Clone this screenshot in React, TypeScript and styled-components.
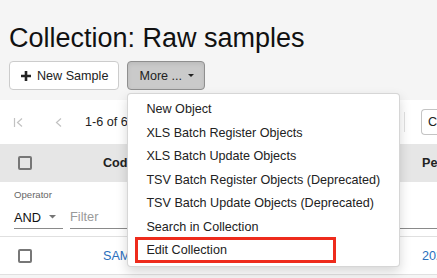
import styled, { createGlobalStyle } from 'styled-components';

const GlobalStyle = createGlobalStyle`
  html, body {
    margin: 0;
    padding: 0;
    background: #f5f5f5;
    font-family: "Liberation Sans", Arial, Helvetica, sans-serif;
    color: #222;
  }
`;

const menuItems = [
  'New Object',
  'XLS Batch Register Objects',
  'XLS Batch Update Objects',
  'TSV Batch Register Objects (Deprecated)',
  'TSV Batch Update Objects (Deprecated)',
  'Search in Collection',
  'Edit Collection',
];

const PlusIcon = () => (
  <svg width='10' height='10' viewBox='0 0 10 10'>
    <path d='M5 0v10M0 5h10' stroke='#222' strokeWidth='2.6' />
  </svg>
);

const Caret = ({ color = '#222', w = 6 }: { color?: string; w?: number }) => (
  <svg width={w} height={w / 2} viewBox='0 0 6 3'>
    <path d='M0 0h6L3 3z' fill={color} />
  </svg>
);

const FirstPageIcon = () => (
  <svg width='11' height='11' viewBox='0 0 11 11'>
    <path d='M1.5 1v9M9 1.5L4.5 5.5L9 9.5' stroke='#c2c2c2' strokeWidth='1.2' fill='none' />
  </svg>
);

const PrevIcon = () => (
  <svg width='7' height='11' viewBox='0 0 7 11'>
    <path d='M6 1.5L1.5 5.5L6 9.5' stroke='#c2c2c2' strokeWidth='1.2' fill='none' />
  </svg>
);

export default function App() {
  return (
    <Page>
      <GlobalStyle />
      <Head>
        <Title>Collection: Raw samples</Title>
        <Toolbar>
          <Button>
            <PlusIcon />
            New Sample
          </Button>
          <MenuHolder>
            <Button pressed>
              More ...
              <Caret w={6} />
            </Button>
            <Menu>
              {menuItems.map((label) => (
                <MenuItem key={label} marked={label === 'Edit Collection'}>
                  {label}
                </MenuItem>
              ))}
            </Menu>
          </MenuHolder>
        </Toolbar>
      </Head>

      <Paper>
        <Pager>
          <PagerIcon size={42}>
            <FirstPageIcon />
          </PagerIcon>
          <PagerIcon size={30}>
            <PrevIcon />
          </PagerIcon>
          <PagerText>1-6 of 6</PagerText>
          <Spacer />
          <Divider />
          <ColumnsBox>C</ColumnsBox>
        </Pager>

        <HeaderRow>
          <CheckCell>
            <Checkbox />
          </CheckCell>
          <CodeCell>
            <HeadText>Code</HeadText>
          </CodeCell>
          <RestCell>
            <HeadText>Permlink</HeadText>
          </RestCell>
        </HeaderRow>

        <FilterRow>
          <Operator>
            <OperatorLabel>Operator</OperatorLabel>
            <OperatorSelect>
              AND
              <Caret color='#757575' w={7} />
            </OperatorSelect>
          </Operator>
          <FilterInput>Filter</FilterInput>
        </FilterRow>

        <DataRow>
          <CheckCell>
            <Checkbox />
          </CheckCell>
          <CodeCell>
            <Link>SAMPLE-1</Link>
          </CodeCell>
          <RestCell>
            <Link>2023</Link>
          </RestCell>
        </DataRow>
      </Paper>
    </Page>
  );
}

const Page = styled.div`
  width: 437px;
  height: 278px;
  overflow: hidden;
`;

const Head = styled.div`
  padding: 23px 9px 0;
`;

const Title = styled.h1`
  margin: 0;
  font-size: 27px;
  line-height: 30px;
  font-weight: 400;
  color: #111;
  white-space: nowrap;
`;

const Toolbar = styled.div`
  display: flex;
  gap: 8px;
  margin-top: 8px;
`;

const Button = styled.button<{ pressed?: boolean }>`
  display: flex;
  align-items: center;
  gap: 6px;
  height: 29px;
  padding: 0 10px 0 11px;
  font-family: inherit;
  font-size: 12.6px;
  color: #222;
  border-radius: 4px;
  border: 1px solid ${(p) => (p.pressed ? '#8f8f8f' : '#cccccc')};
  background: ${(p) => (p.pressed ? '#cacaca' : '#ffffff')};
  box-shadow: ${(p) => (p.pressed ? 'inset 0 2px 4px rgba(0,0,0,0.08)' : 'none')};
  cursor: pointer;
`;

const MenuHolder = styled.div`
  position: relative;
`;

const Menu = styled.ul`
  position: absolute;
  z-index: 2;
  top: 32px;
  left: 0;
  width: 271px;
  margin: 0;
  padding: 4px 0 3px;
  list-style: none;
  background: #fff;
  border: 1px solid rgba(0, 0, 0, 0.16);
  border-radius: 4px;
  box-shadow: 0 5px 12px rgba(0, 0, 0, 0.16);
`;

const MenuItem = styled.li<{ marked?: boolean }>`
  position: relative;
  height: 23.5px;
  line-height: 23.5px;
  padding: 0 18px;
  font-size: 12.6px;
  color: #222;
  white-space: nowrap;

  &::after {
    content: '';
    display: ${(p) => (p.marked ? 'block' : 'none')};
    position: absolute;
    left: 7px;
    top: -2px;
    width: 201px;
    height: 26px;
    box-sizing: border-box;
    border: 3px solid #ee2b1c;
  }
`;

const Paper = styled.div`
  margin-top: 10px;
  background: #fff;
`;

const Pager = styled.div`
  display: flex;
  align-items: center;
  height: 44px;
  padding-left: 13px;
  font-size: 12.6px;
`;

const PagerIcon = styled.span<{ size: number }>`
  display: flex;
  align-items: center;
  width: ${(p) => p.size}px;
  flex-shrink: 0;
`;

const PagerText = styled.span`
  color: #222;
  white-space: nowrap;
`;

const Spacer = styled.div`
  flex: 1;
`;

const Divider = styled.div`
  width: 1px;
  height: 20px;
  background: #e0e0e0;
  margin-right: 16px;
  flex-shrink: 0;
`;

const ColumnsBox = styled.div`
  flex-shrink: 0;
  width: 40px;
  margin-right: -24px;
  height: 26px;
  box-sizing: border-box;
  border: 1px solid #c4c4c4;
  border-right: none;
  border-radius: 4px 0 0 4px;
  padding-left: 6px;
  line-height: 24px;
  font-size: 12.6px;
`;

const Row = styled.div`
  display: flex;
  align-items: center;
`;

const HeaderRow = styled(Row)`
  height: 38px;
  background: #e6e6e6;
`;

const DataRow = styled(Row)`
  height: 37px;
  border-bottom: 1px solid #e0e0e0;
`;

const CheckCell = styled.div`
  flex-shrink: 0;
  width: 85px;
  padding-left: 18px;
  display: flex;
`;

const CodeCell = styled.div`
  width: 319px;
  flex-shrink: 0;
  font-size: 12.6px;
`;

const RestCell = styled.div`
  flex-shrink: 0;
  font-size: 12.6px;
  white-space: nowrap;
`;

const Checkbox = styled.span`
  width: 14px;
  height: 14px;
  box-sizing: border-box;
  border: 2px solid #777;
  border-radius: 2px;
`;

const HeadText = styled.span`
  font-weight: 700;
  color: #222;
`;

const Link = styled.span`
  color: #2a6ebc;
`;

const FilterRow = styled.div`
  display: flex;
  align-items: flex-end;
  gap: 7px;
  height: 55px;
  box-sizing: border-box;
  padding: 0 0 7px 14px;
  border-bottom: 1px solid #e0e0e0;
`;

const Operator = styled.div`
  display: flex;
  flex-direction: column;
  width: 49px;
`;

const OperatorLabel = styled.span`
  font-size: 9.6px;
  color: #666;
  line-height: 12px;
  margin-bottom: 5px;
`;

const OperatorSelect = styled.div`
  display: flex;
  align-items: center;
  gap: 8px;
  height: 22px;
  font-size: 12.8px;
  color: #111;
  border-bottom: 1px solid #8a8a8a;
`;

const FilterInput = styled.div`
  flex: 1;
  height: 22px;
  line-height: 22px;
  font-size: 12.8px;
  color: #9a9a9a;
  border-bottom: 1px solid #8a8a8a;
`;
